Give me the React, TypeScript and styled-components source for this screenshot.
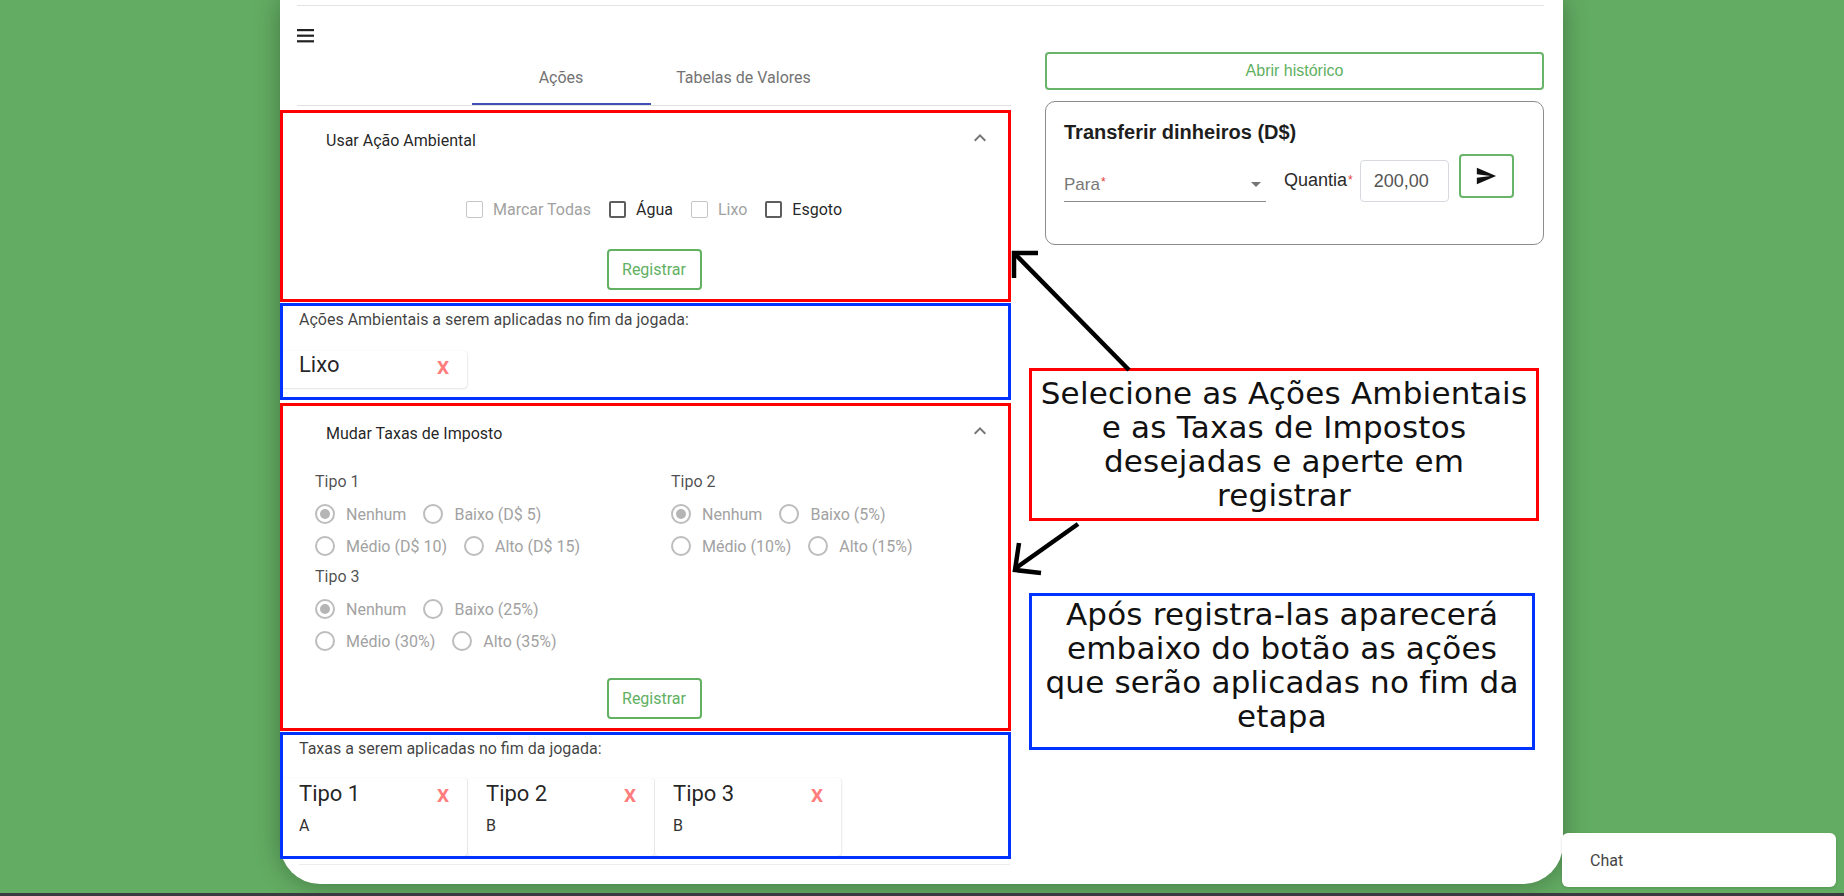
import styled, { createGlobalStyle } from "styled-components"

const PAGE_GREEN = "#63ac63"
const OK_GREEN = "#62b062"
const NOTE_RED = "#ff0000"
const NOTE_BLUE = "#0033ff"

const GlobalStyle = createGlobalStyle`
  html, body {
    margin: 0;
    padding: 0;
  }
  body {
    background: ${PAGE_GREEN};
    font-family: Roboto, "Liberation Sans", Arial, sans-serif;
    overflow: hidden;
  }
  * {
    box-sizing: border-box;
  }
`

type Option = { label: string; checked?: boolean }

const acoes = [
  { label: "Marcar Todas", disabled: true },
  { label: "Água" },
  { label: "Lixo", disabled: true },
  { label: "Esgoto" },
]

const taxas: { title: string; rows: Option[][] }[] = [
  {
    title: "Tipo 1",
    rows: [
      [{ label: "Nenhum", checked: true }, { label: "Baixo (D$ 5)" }],
      [{ label: "Médio (D$ 10)" }, { label: "Alto (D$ 15)" }],
    ],
  },
  {
    title: "Tipo 2",
    rows: [
      [{ label: "Nenhum", checked: true }, { label: "Baixo (5%)" }],
      [{ label: "Médio (10%)" }, { label: "Alto (15%)" }],
    ],
  },
  {
    title: "Tipo 3",
    rows: [
      [{ label: "Nenhum", checked: true }, { label: "Baixo (25%)" }],
      [{ label: "Médio (30%)" }, { label: "Alto (35%)" }],
    ],
  },
]

const taxasAplicadas = [
  { title: "Tipo 1", value: "A" },
  { title: "Tipo 2", value: "B" },
  { title: "Tipo 3", value: "B" },
]

const ChevronUp = () => (
  <svg width="24" height="24" viewBox="0 0 24 24">
    <path d="M12 8l-6 6 1.41 1.41L12 10.83l4.59 4.58L18 14z" fill="rgba(0,0,0,0.54)" />
  </svg>
)

const App = () => {
  return (
    <>
      <GlobalStyle />
      <Root>
        <Stage>
          <Panel>
            <TopLine />
            <Body>
              <LeftCol>
                <MenuIcon width="17" height="14" viewBox="0 0 17 14">
                  <rect x="0" y="0" width="17" height="2.2" fill="#222" />
                  <rect x="0" y="5.6" width="17" height="2.2" fill="#222" />
                  <rect x="0" y="11.2" width="17" height="2.2" fill="#222" />
                </MenuIcon>
                <TabBar>
                  <Tab $width={179} $active>
                    Ações
                  </Tab>
                  <Tab $width={186}>Tabelas de Valores</Tab>
                </TabBar>

                {/* acoes ambientais */}
                <Annotated $color={NOTE_RED} $top={4}>
                  <AccordionHeader>
                    <span>Usar Ação Ambiental</span>
                    <ChevronUp />
                  </AccordionHeader>
                  <CenteredBody $top={21}>
                    <CheckRow>
                      {acoes.map((a) => (
                        <CheckItem key={a.label} $disabled={a.disabled}>
                          <CheckBox $disabled={a.disabled} />
                          {a.label}
                        </CheckItem>
                      ))}
                    </CheckRow>
                    <RegisterButton $top={19}>Registrar</RegisterButton>
                  </CenteredBody>
                </Annotated>

                <Annotated $color={NOTE_BLUE} $top={1}>
                  <ListBody $bottom={9}>
                    <ListLabel>Ações Ambientais a serem aplicadas no fim da jogada:</ListLabel>
                    <CardRow $top={22}>
                      <ChipCard $height={37}>
                        <CardHead $height={27}>
                          Lixo
                          <RemoveMark>X</RemoveMark>
                        </CardHead>
                      </ChipCard>
                    </CardRow>
                  </ListBody>
                </Annotated>

                {/* taxas de imposto */}
                <Annotated $color={NOTE_RED} $top={3}>
                  <AccordionHeader>
                    <span>Mudar Taxas de Imposto</span>
                    <ChevronUp />
                  </AccordionHeader>
                  <CenteredBody $top={10}>
                    <TaxGrid>
                      {taxas.map((t) => (
                        <RadioGroup key={t.title}>
                          <GroupLabel>{t.title}</GroupLabel>
                          <RadioRows>
                            {t.rows.map((row, i) => (
                              <RadioRow key={i}>
                                {row.map((o) => (
                                  <RadioOption key={o.label}>
                                    <RadioCircle $checked={o.checked} />
                                    {o.label}
                                  </RadioOption>
                                ))}
                              </RadioRow>
                            ))}
                          </RadioRows>
                        </RadioGroup>
                      ))}
                    </TaxGrid>
                    <RegisterButton $top={21}>Registrar</RegisterButton>
                  </CenteredBody>
                </Annotated>

                <Annotated $color={NOTE_BLUE} $top={1}>
                  <ListBody $bottom={0}>
                    <ListLabel>Taxas a serem aplicadas no fim da jogada:</ListLabel>
                    <CardRow $top={20}>
                      {taxasAplicadas.map((t) => (
                        <ChipCard key={t.title} $height={78}>
                          <CardHead $height={30}>
                            {t.title}
                            <RemoveMark>X</RemoveMark>
                          </CardHead>
                          <CardValue>{t.value}</CardValue>
                        </ChipCard>
                      ))}
                    </CardRow>
                  </ListBody>
                </Annotated>
                <PaperEdge />
              </LeftCol>

              <RightCol>
                <HistoryButton>Abrir histórico</HistoryButton>
                <TransferCard>
                  <TransferTitle>Transferir dinheiros (D$)</TransferTitle>
                  <TransferRow>
                    <SelectField>
                      <span>
                        Para<Required>*</Required>
                      </span>
                      <svg width="24" height="24" viewBox="0 0 24 24">
                        <path d="M7 10l5 5 5-5z" fill="#757575" />
                      </svg>
                    </SelectField>
                    <QtyLabel>
                      Quantia<Required>*</Required>
                    </QtyLabel>
                    <QtyInput>200,00</QtyInput>
                    <SendButton>
                      <svg width="22" height="22" viewBox="0 0 24 24">
                        <path d="M2.01 21 23 12 2.01 3 2 10l15 2-15 2z" fill="#111" />
                      </svg>
                    </SendButton>
                  </TransferRow>
                </TransferCard>

                <Note $color={NOTE_RED} $top={123} $width={510} $height={153} $pad={5}>
                  Selecione as Ações Ambientais
                  <br />e as Taxas de Impostos
                  <br />
                  desejadas e aperte em
                  <br />
                  registrar
                </Note>
                <Note $color={NOTE_BLUE} $top={72} $width={506} $height={157} $pad={1}>
                  Após registra-las aparecerá
                  <br />
                  embaixo do botão as ações
                  <br />
                  que serão aplicadas no fim da
                  <br />
                  etapa
                </Note>
              </RightCol>
            </Body>
          </Panel>
        </Stage>
        <Strip />

        <Arrows width="1844" height="896" viewBox="0 0 1844 896">
          <g stroke="#000" strokeWidth="4.5" fill="none" strokeLinejoin="miter">
            <line x1="1129" y1="370" x2="1015" y2="254" />
            <polyline points="1038,253 1014,253 1014,278" />
            <line x1="1078" y1="524" x2="1016" y2="568" />
            <polyline points="1019,543 1015,570 1041,573" />
          </g>
        </Arrows>

        <ChatWidget>Chat</ChatWidget>
      </Root>
    </>
  )
}

export default App

const Root = styled.div`
  position: relative;
  width: 1844px;
  height: 896px;
  display: flex;
  flex-direction: column;
`

const Stage = styled.div`
  flex: 1;
  padding-left: 280px;
`

const Panel = styled.div`
  width: 1283px;
  height: 884px;
  display: flex;
  flex-direction: column;
  background: #fff;
  border-radius: 0 0 40px 40px;
  box-shadow: 0 0 26px rgba(0, 0, 0, 0.32);
  padding: 5px 19px 0 17px;
`

const Strip = styled.div`
  height: 3px;
  background: #3b3a40;
`

const TopLine = styled.div`
  height: 1px;
  background: #e4e4e4;
`

const Body = styled.div`
  display: flex;
  gap: 34px;
`

const LeftCol = styled.div`
  width: 714px;
  display: flex;
  flex-direction: column;
`

const MenuIcon = styled.svg`
  display: block;
  margin-top: 23px;
`

const TabBar = styled.div`
  margin-top: 14px;
  height: 49px;
  display: flex;
  justify-content: center;
  border-bottom: 1px solid #e0e0e0;
`

const Tab = styled.div<{ $width: number; $active?: boolean }>`
  position: relative;
  width: ${({ $width }) => $width}px;
  display: flex;
  align-items: center;
  justify-content: center;
  padding-bottom: 7px;
  font-size: 16px;
  color: #737373;

  ${({ $active }) =>
    $active &&
    `
    &::after {
      content: "";
      position: absolute;
      left: 0;
      right: 0;
      bottom: 0;
      height: 2px;
      background: #3f51b5;
    }
  `}
`

const Annotated = styled.section<{ $color: string; $top: number }>`
  position: relative;
  margin-left: -17px;
  margin-top: ${({ $top }) => $top}px;
  width: 731px;
  padding: 3px;
  background: #fff;

  &::after {
    content: "";
    position: absolute;
    inset: 0;
    border: 3px solid ${({ $color }) => $color};
    pointer-events: none;
    z-index: 2;
  }
`

const AccordionHeader = styled.div`
  height: 54px;
  display: flex;
  align-items: center;
  justify-content: space-between;
  padding: 0 16px 0 43px;
  font-size: 16px;
  color: rgba(0, 0, 0, 0.87);

  svg {
    margin-top: -4px;
  }
`

const CenteredBody = styled.div<{ $top: number }>`
  display: flex;
  flex-direction: column;
  align-items: center;
  padding: ${({ $top }) => $top}px 0 9px 17px;
`

const CheckRow = styled.div`
  height: 42px;
  display: flex;
  align-items: center;
  gap: 18px;
`

const CheckItem = styled.label<{ $disabled?: boolean }>`
  display: flex;
  align-items: center;
  gap: 10px;
  font-size: 16px;
  color: ${({ $disabled }) => ($disabled ? "#a2a2a2" : "rgba(0, 0, 0, 0.87)")};
`

const CheckBox = styled.span<{ $disabled?: boolean }>`
  width: 17px;
  height: 17px;
  border-radius: 2px;
  border: ${({ $disabled }) => ($disabled ? "1.5px solid #c6c6c6" : "2px solid #5e5e5e")};
`

const RegisterButton = styled.button<{ $top: number }>`
  margin-top: ${({ $top }) => $top}px;
  width: 95px;
  height: 41px;
  border: 2px solid ${OK_GREEN};
  border-radius: 4px;
  background: #fff;
  color: ${OK_GREEN};
  font-family: Roboto, sans-serif;
  font-size: 16px;
`

const ListBody = styled.div<{ $bottom: number }>`
  padding: 5px 0 ${({ $bottom }) => $bottom}px 16px;
`

const ListLabel = styled.div`
  font-size: 16px;
  line-height: 18px;
  color: rgba(0, 0, 0, 0.75);
`

const CardRow = styled.div<{ $top: number }>`
  display: flex;
  gap: 1px;
  margin-top: ${({ $top }) => $top}px;
  margin-left: -18px;
`

const ChipCard = styled.div<{ $height: number }>`
  width: 186px;
  height: ${({ $height }) => $height}px;
  padding: 0 18px;
  background: #fff;
  border-radius: 4px;
  box-shadow:
    0 1px 2px rgba(0, 0, 0, 0.1),
    1px 0 2px rgba(0, 0, 0, 0.06);
`

const CardHead = styled.div<{ $height: number }>`
  height: ${({ $height }) => $height}px;
  display: flex;
  align-items: center;
  justify-content: space-between;
  font-size: 22px;
  color: rgba(0, 0, 0, 0.87);
`

const RemoveMark = styled.span`
  margin-top: 5px;
  font-size: 19px;
  font-weight: 700;
  color: #ff7d7d;
`

const CardValue = styled.div`
  margin-top: 8px;
  font-size: 16px;
  line-height: 20px;
  color: #333;
`

const TaxGrid = styled.div`
  align-self: stretch;
  display: grid;
  grid-template-columns: 356px 1fr;
  row-gap: 3px;
  padding-left: 15px;
`

const RadioGroup = styled.div`
  display: flex;
  flex-direction: column;
`

const GroupLabel = styled.div`
  font-size: 16px;
  line-height: 24px;
  color: rgba(0, 0, 0, 0.7);
`

const RadioRows = styled.div`
  margin-top: 4px;
`

const RadioRow = styled.div`
  height: 32px;
  display: flex;
  align-items: center;
  gap: 17px;
`

const RadioOption = styled.label`
  display: flex;
  align-items: center;
  gap: 11px;
  font-size: 16px;
  color: #a2a2a2;
`

const RadioCircle = styled.span<{ $checked?: boolean }>`
  position: relative;
  width: 20px;
  height: 20px;
  border-radius: 50%;
  border: 2px solid #bdbdbd;

  ${({ $checked }) =>
    $checked &&
    `
    &::after {
      content: "";
      position: absolute;
      inset: 3px;
      border-radius: 50%;
      background: #b5b5b5;
    }
  `}
`

const PaperEdge = styled.div`
  margin: 5px 1px 0 2px;
  height: 1px;
  background: #ececec;
`

const RightCol = styled.div`
  width: 499px;
  display: flex;
  flex-direction: column;
  font-family: "Liberation Sans", Arial, sans-serif;
`

const HistoryButton = styled.button`
  margin-top: 46px;
  height: 38px;
  border: 2px solid #68b468;
  border-radius: 4px;
  background: #fff;
  color: #5fb05f;
  font-family: "Liberation Sans", Arial, sans-serif;
  font-size: 16px;
`

const TransferCard = styled.div`
  margin-top: 11px;
  height: 144px;
  border: 1px solid #8c8c8c;
  border-radius: 10px;
  padding: 18px 18px 0;
`

const TransferTitle = styled.div`
  font-size: 20px;
  line-height: 24px;
  font-weight: 700;
  color: #1e1e1e;
`

const TransferRow = styled.div`
  margin-top: 10px;
  height: 48px;
  display: flex;
  align-items: flex-end;
`

const SelectField = styled.div`
  width: 202px;
  height: 44px;
  display: flex;
  align-items: flex-end;
  justify-content: space-between;
  padding-bottom: 6px;
  border-bottom: 1px solid #8a8a8a;
  font-size: 17px;
  color: #777;

  svg {
    margin: 0 -2px -1px 0;
  }
`

const Required = styled.span`
  font-size: 12px;
  color: #e53935;
  vertical-align: top;
  margin-left: 1px;
`

const QtyLabel = styled.div`
  margin: 0 0 11px 18px;
  font-size: 18px;
  line-height: 21px;
  color: #2a2a2a;
`

const QtyInput = styled.div`
  margin-left: 7px;
  width: 89px;
  height: 42px;
  display: flex;
  align-items: center;
  padding-left: 13px;
  border: 1px solid #d6d9de;
  border-radius: 4px;
  font-size: 18px;
  color: #555;
`

const SendButton = styled.button`
  margin: 0 0 4px 10px;
  width: 55px;
  height: 44px;
  display: flex;
  align-items: center;
  justify-content: center;
  border: 2px solid #68b468;
  border-radius: 4px;
  background: #fff;
`

const Note = styled.div<{ $color: string; $top: number; $width: number; $height: number; $pad: number }>`
  margin-top: ${({ $top }) => $top}px;
  margin-left: -16px;
  width: ${({ $width }) => $width}px;
  height: ${({ $height }) => $height}px;
  padding-top: ${({ $pad }) => $pad}px;
  border: 3px solid ${({ $color }) => $color};
  background: #fff;
  font-family: "DejaVu Sans", "Open Sans", sans-serif;
  font-size: 31px;
  line-height: 34px;
  letter-spacing: 0.2px;
  text-align: center;
  white-space: nowrap;
  color: #111;
`

const Arrows = styled.svg`
  position: absolute;
  top: 0;
  left: 0;
  pointer-events: none;
  z-index: 5;
`

const ChatWidget = styled.div`
  position: absolute;
  right: 8px;
  bottom: 9px;
  width: 274px;
  height: 54px;
  display: flex;
  align-items: center;
  padding-left: 28px;
  background: #fff;
  border-radius: 6px;
  box-shadow: 0 1px 3px rgba(0, 0, 0, 0.15);
  font-size: 16px;
  color: #444;
  z-index: 6;
`
